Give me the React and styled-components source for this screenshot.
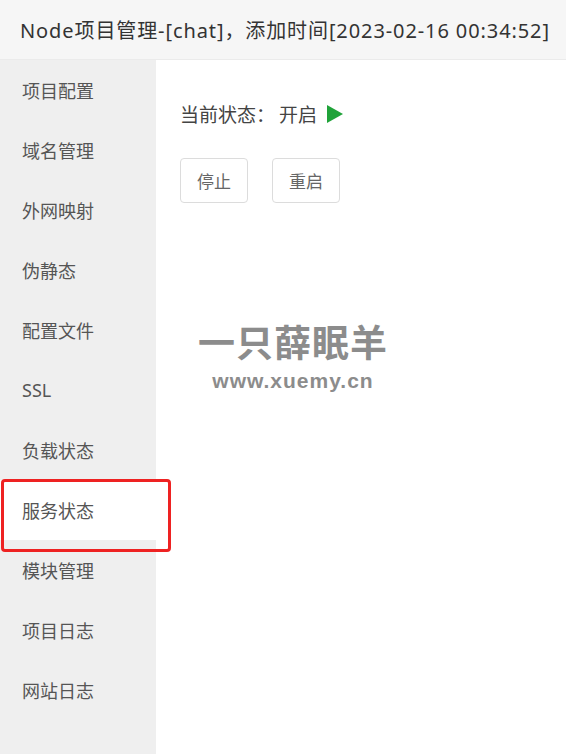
import React from "react";
import styled, { createGlobalStyle } from "styled-components";

const GlobalStyle = createGlobalStyle`
  html, body {
    margin: 0;
    padding: 0;
    background: #fff;
  }
  body {
    font-family: "Noto Sans", "Noto Sans CJK SC", sans-serif;
  }
`;

const Page = styled.div`
  width: 566px;
  height: 754px;
  display: flex;
  flex-direction: column;
  overflow: hidden;
`;

const Header = styled.div`
  height: 59px;
  flex-shrink: 0;
  display: flex;
  align-items: center;
  padding-left: 20px;
  background: #f6f6f6;
  border-bottom: 1px solid #ebebeb;
  color: #333;
  font-size: 20px;
  letter-spacing: 0.9px;
  white-space: nowrap;
`;

const Body = styled.div`
  flex: 1;
  display: flex;
`;

const Sidebar = styled.div`
  width: 156px;
  flex-shrink: 0;
  background: #efefef;
  display: flex;
  flex-direction: column;
`;

const MenuItem = styled.div`
  position: relative;
  height: 60px;
  display: flex;
  align-items: center;
  padding-left: 22px;
  font-size: 18px;
  color: #555;
  background: ${(p) => (p.$active ? "#fff" : "transparent")};
`;

const Highlight = styled.div`
  position: absolute;
  left: 1px;
  top: -1px;
  width: 170px;
  height: 73px;
  box-sizing: border-box;
  border: 3px solid #ee2222;
  border-radius: 4px;
  pointer-events: none;
`;

const Content = styled.div`
  flex: 1;
  position: relative;
  padding: 30px 0 0 24px;
`;

const Status = styled.div`
  display: flex;
  align-items: center;
  height: 48px;
  font-size: 19px;
  color: #444;
`;

const StatusValue = styled.span`
  margin-left: 4px;
`;

const Play = styled.span`
  width: 0;
  height: 0;
  margin-left: 10px;
  border-top: 9px solid transparent;
  border-bottom: 9px solid transparent;
  border-left: 16px solid #20a33a;
`;

const Actions = styled.div`
  display: flex;
  gap: 24px;
  margin-top: 20px;
`;

const Button = styled.button`
  width: 68px;
  height: 45px;
  border: 1px solid #dcdcdc;
  border-radius: 4px;
  background: #fff;
  color: #666;
  font-family: inherit;
  font-size: 17px;
  padding: 0;
`;

const Watermark = styled.div`
  position: absolute;
  left: 42px;
  top: 264px;
  display: flex;
  flex-direction: column;
  align-items: center;
  color: #8c8c8c;
  font-weight: 700;
  user-select: none;
`;

const MarkTitle = styled.div`
  font-size: 37px;
  line-height: 38px;
  letter-spacing: 1px;
`;

const MarkUrl = styled.div`
  font-family: "Liberation Sans", Arial, sans-serif;
  font-size: 21px;
  line-height: 22px;
  margin-top: 8px;
  letter-spacing: 1px;
`;

const menu = [
  "项目配置",
  "域名管理",
  "外网映射",
  "伪静态",
  "配置文件",
  "SSL",
  "负载状态",
  "服务状态",
  "模块管理",
  "项目日志",
  "网站日志",
];

export default function App() {
  return (
    <Page>
      <GlobalStyle />
      <Header>Node项目管理-[chat]，添加时间[2023-02-16 00:34:52]</Header>
      <Body>
        <Sidebar>
          {menu.map((item) => (
            <MenuItem key={item} $active={item === "服务状态"}>
              {item}
              {item === "服务状态" && <Highlight />}
            </MenuItem>
          ))}
        </Sidebar>
        <Content>
          <Status>
            当前状态：<StatusValue>开启</StatusValue>
            <Play />
          </Status>
          <Actions>
            <Button>停止</Button>
            <Button>重启</Button>
          </Actions>
          <Watermark>
            <MarkTitle>一只薛眠羊</MarkTitle>
            <MarkUrl>www.xuemy.cn</MarkUrl>
          </Watermark>
        </Content>
      </Body>
    </Page>
  );
}
